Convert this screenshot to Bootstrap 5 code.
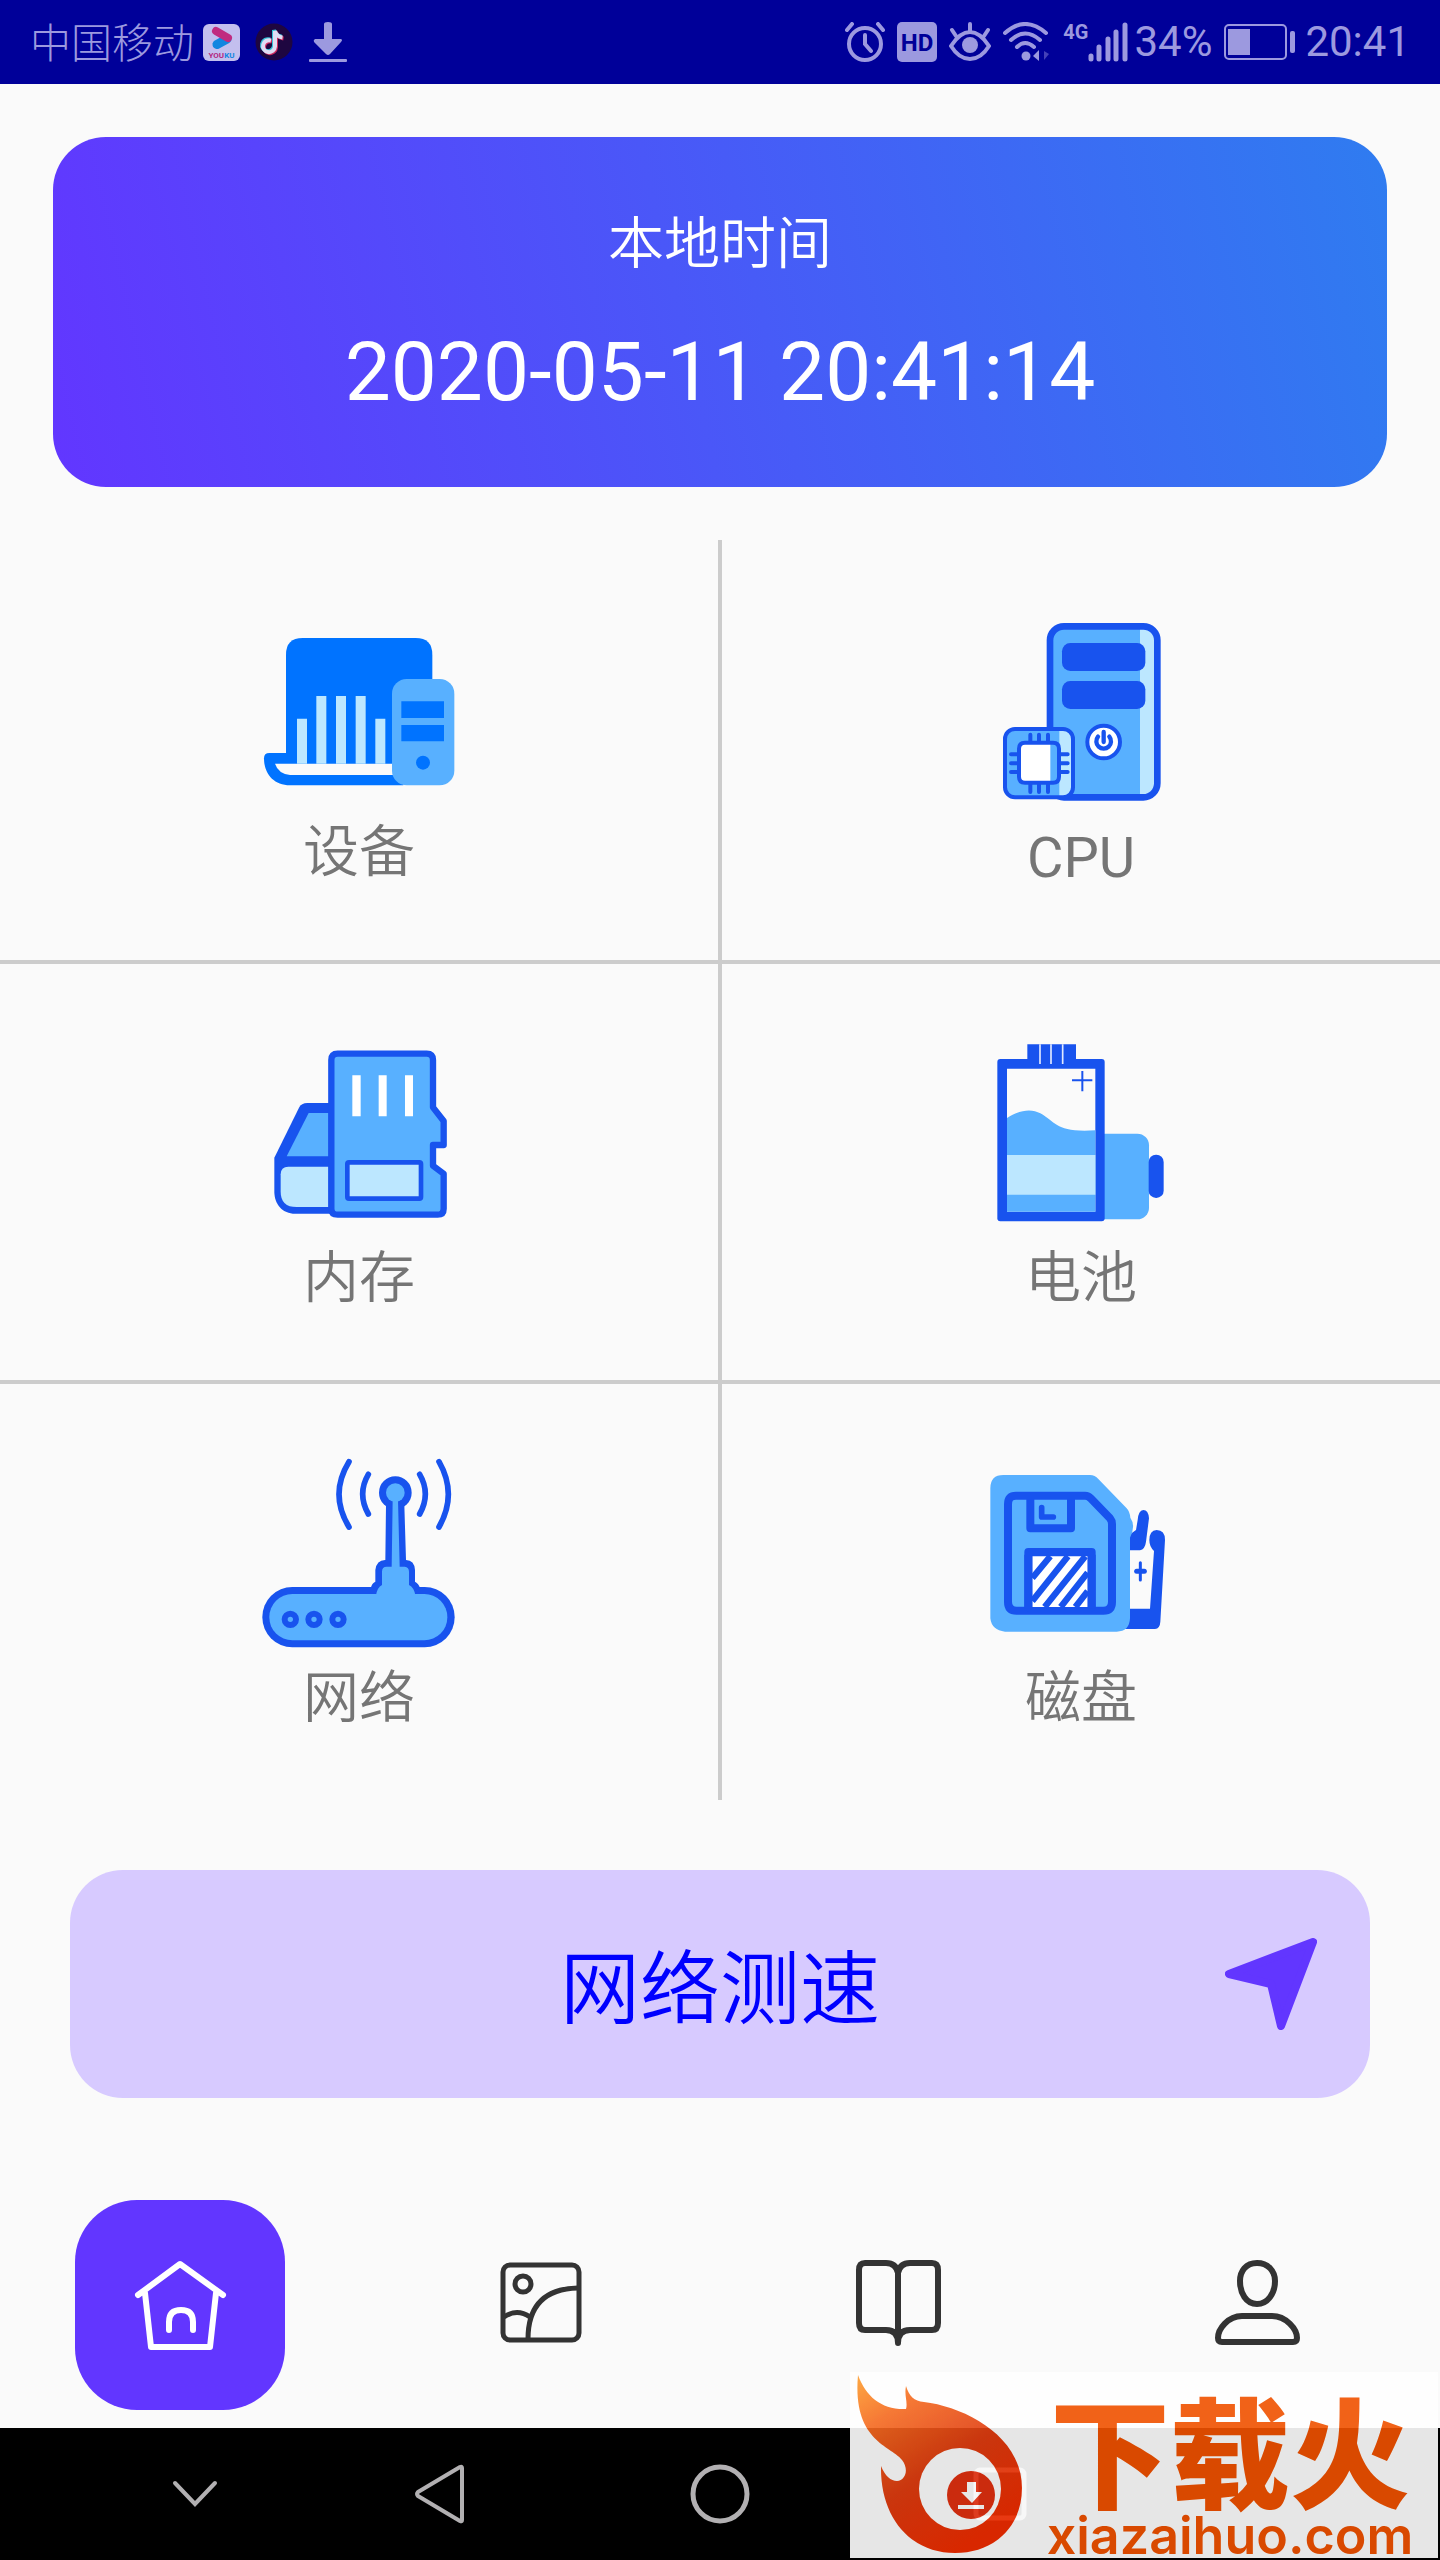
<!DOCTYPE html>
<html lang="zh-CN">
<head>
<meta charset="utf-8">
<meta name="viewport" content="width=device-width, initial-scale=1">
<title>本地时间</title>
<link href="https://cdn.jsdelivr.net/npm/bootstrap@5.3.0/dist/css/bootstrap.min.css" rel="stylesheet">
<style>
  body { background: #fafafa; font-family: Roboto, "Noto Sans CJK SC", sans-serif; }
  svg { display: block; flex: none; }
  .status-bar { height: 84px; padding: 0 30px; background: #009; color: #9c99df; font-size: 42px; line-height: 48px; }
  .carrier { font-size: 41px; font-weight: 300; padding-top: 4px; }
  .status-group { gap: 12px; }
  .status-left { gap: 9px; }
  .status-left svg + svg { margin-left: 6px; }
  .signal-group { margin-right: -6px; }
  .battery-level { margin-right: -3px; }
  .net-type { font-size: 20px; line-height: 20px; font-weight: 700; }
  .clock-card { margin: 53px 53px 0; padding-top: 6px; height: 350px; border-radius: 53px; background: linear-gradient(77deg, #6236ff, #2f7cf0); color: #fff; }
  .clock-title { font-size: 56px; line-height: 80px; margin: 0 0 34px; font-weight: 350; }
  .clock-time { font-size: 82px; line-height: 108px; }
  .tiles { margin-top: 53px; }
  .tile { height: 420px; color: #757575; text-decoration: none; font-size: 56px; line-height: 66px; font-weight: 350; }
  .tile-latin { font-weight: 400; }
  .tiles .col-6:nth-child(odd) .tile { border-right: 2px solid #ccc; }
  .tiles .col-6:nth-child(even) .tile { border-left: 2px solid #ccc; }
  .tiles .col-6:nth-child(n+3) .tile { border-top: 4px solid #ccc; }
  .speed-btn { display: grid; grid-template-columns: 1fr auto 1fr; align-items: center; margin: 70px 70px 0; height: 228px; padding: 0 53px; border: 0; border-radius: 53px; background: #d7caff; color: #00f; font-size: 80px; line-height: 100px; font-weight: 350; }
  .speed-text { padding-top: 12px; }
  .tabs { margin-top: 102px; height: 228px; }
  .tab-item { width: 210px; height: 210px; border-radius: 62px; display: flex; align-items: center; justify-content: center; color: #333; }
  .tab-item.active { background: #6236ff; color: #fff; }
  .sys-nav { height: 132px; background: #000; }
  .sys-nav button { width: 280px; height: 132px; padding: 0; border: 0; background: none; color: #b2b0b2; display: flex; align-items: center; justify-content: center; }
  .sys-nav .sys-hide { width: 210px; }
  .site-stamp { position: absolute; right: 2px; bottom: 2px; width: 588px; height: 186px; background: #fff; opacity: .9; color: #f15200; }
  .stamp-words { position: absolute; left: 172px; right: 0; top: 20px; text-align: center; }
  .stamp-name { font-family: "Noto Sans CJK SC", sans-serif; font-weight: 900; font-size: 120px; line-height: 112px; }
  .stamp-url { font-family: Inter, sans-serif; font-weight: 600; font-size: 52px; line-height: 44px; margin-top: 10px; }
</style>
<script src="https://cdn.jsdelivr.net/npm/bootstrap@5.3.0/dist/js/bootstrap.bundle.min.js"></script>
</head>
<body>
<div class="position-relative">

<header class="status-bar d-flex align-items-center justify-content-between">
  <div class="status-left d-flex align-items-center">
    <span class="carrier">中国移动</span>
    <svg width="37" height="37" viewBox="0 0 37 37"><rect width="37" height="37" rx="6" fill="#c3bfee"/><path d="M14 20.500 24 15" stroke="#1286e0" stroke-width="9" stroke-linecap="round"/><path d="M13 7 25 14" stroke="#c02c80" stroke-width="8" stroke-linecap="round"/><text x="18.500" y="34" font-size="8" font-weight="700" text-anchor="middle"><tspan fill="#b3267f">YOU</tspan><tspan fill="#1286e0">KU</tspan></text></svg>
    <svg width="38" height="38" viewBox="0 0 38 38"><circle cx="19" cy="19" r="18.500" fill="#1e0640"/><g fill="none" stroke-width="4"><path d="M16 17.500a6 6 0 1 0 4 6V8c1 4 4 6 7.500 6.500" stroke="#d02a60" transform="translate(1 1)"/><path d="M16 17.500a6 6 0 1 0 4 6V8c1 4 4 6 7.500 6.500" stroke="#35c3d8" transform="translate(-1 -1)"/><path d="M16 17.500a6 6 0 1 0 4 6V8c1 4 4 6 7.500 6.500" stroke="#e0dcf4"/></g></svg>
    <svg width="40" height="40" viewBox="0 0 40 40" fill="currentColor"><path d="M16 2q0-2 4-2t4 2v15h9q2 1 0 3L22 32q-2 2-4 0L6 20q-1-2 1-3h9z"/><rect x="1" y="37" width="38" height="3" rx="1"/></svg>
  </div>
  <div class="status-group d-flex align-items-center">
    <svg width="40" height="40" viewBox="0 0 40 40" fill="none" stroke="currentColor" stroke-width="4" stroke-linecap="round"><circle cx="20" cy="22" r="16"/><path d="M20 13v9l6 7M2 8l5-6M38 8l-5-6"/></svg>
    <svg width="40" height="40" viewBox="0 0 40 40"><rect width="40" height="40" rx="5" fill="currentColor"/><text x="20" y="29" font-size="24" font-weight="700" text-anchor="middle" fill="#009">HD</text></svg>
    <svg width="42" height="40" viewBox="0 0 42 40" fill="none" stroke="currentColor" stroke-width="4" stroke-linecap="round"><path d="M2 24Q11 10 21 10t19 14Q32 37 21 37T2 24zM21 10V2M7 14 3 8M35 14l4-6"/><circle cx="21" cy="23" r="8" fill="currentColor" stroke="none"/></svg>
    <svg width="48" height="40" viewBox="0 0 48 40" fill="none" stroke="currentColor" stroke-width="4" stroke-linecap="round"><path d="M2 11Q22-7 43 11M8 18q14-13 29 0M14 25q8-8 17 0"/><circle cx="23" cy="34" r="4.500" fill="currentColor" stroke="none"/><path d="M36 28v11l-6-5z" fill="currentColor" stroke="none"/><path d="M41 29v9l5-6z" fill="#4440b8" stroke="none"/></svg>
    <div class="signal-group d-flex align-items-start">
      <span class="net-type">4G</span>
      <svg width="40" height="40" viewBox="0 0 40 40" stroke="currentColor" stroke-width="5" stroke-linecap="round"><path d="M3 34v3M11 25v12M20 17v20M28 10v27M37 3v34"/></svg>
    </div>
    <span>34%</span>
    <svg class="battery-level" width="72" height="36" viewBox="0 0 72 36"><rect x="1" y="1" width="61" height="34" rx="4" fill="none" stroke="currentColor" stroke-width="2"/><rect x="4" y="5" width="22" height="26" fill="currentColor"/><rect x="66" y="7" width="5" height="22" rx="2" fill="currentColor"/></svg>
    <span>20:41</span>
  </div>
</header>

<main>
  <section class="clock-card d-flex flex-column align-items-center justify-content-center">
    <h1 class="clock-title">本地时间</h1>
    <time class="clock-time" datetime="2020-05-11T20:41:14">2020-05-11 20:41:14</time>
  </section>

  <nav class="tiles row g-0">
    <div class="col-6"><a href="#device" class="tile d-flex flex-column align-items-center justify-content-center">
      <svg width="260" height="204" viewBox="-3 45 780 612"><g fill="#0073ff"><path d="M168 480V164q0-50 50-50h339q50 0 50 50v326H168z"/><path d="M118 459h402v97H180c-50 0-78-36-78-81q0-16 16-16z"/></g><path d="M135 491h360v34H180q-35-4-45-34z" fill="#fafafa"/><path d="M201 356h30v135h-30zM259 288h30v203h-30zM318 288h30v203h-30zM377 288h30v203h-30zM436 356h30v135h-30z" fill="#bce7ff"/><rect x="486" y="237" width="187" height="319" rx="44" fill="#58b0ff"/><path d="M514 304h128v50H514zM514 375h128v49H514z" fill="#0073ff"/><circle cx="579" cy="488" r="21" fill="#0073ff"/></svg>
      <span>设备</span></a></div>
    <div class="col-6"><a href="#cpu" class="tile d-flex flex-column align-items-center justify-content-center">
      <svg width="260" height="216" viewBox="-27 27 780 648"><rect x="270" y="79" width="322" height="513" rx="42" fill="#58b0ff"/><path d="M540 85h14q32 4 32 40v420q0 36-32 40h-14z" fill="#bce7ff"/><rect x="270" y="79" width="322" height="513" rx="42" fill="none" stroke="#1853ee" stroke-width="20"/><g fill="#1853ee"><rect x="306" y="129" width="250" height="84" rx="25"/><rect x="306" y="243" width="250" height="84" rx="25"/></g><g stroke="#1853ee" stroke-linecap="round"><circle cx="431" cy="426" r="49" fill="#fff" stroke-width="12"/><path d="M414 410a22 22 0 1 0 34 0M431 396v30" fill="none" stroke-width="13"/><rect x="135" y="387" width="204" height="205" rx="30" fill="#58b0ff" stroke="none"/><path d="M298 387h12q29 3 29 30v145q0 27-29 30h-12z" fill="#bce7ff" stroke="none"/><rect x="135" y="387" width="204" height="205" rx="30" fill="none" stroke-width="12"/><rect x="177" y="428" width="120" height="120" rx="18" fill="#fff" stroke="none"/><path d="M271 432h20v112h-20z" fill="#58b0ff" stroke="none"/><path d="M195 428h84q18 0 18 18v84q0 18-18 18h-84q-18 0-18-18v-84q0-18 18-18zM211 404v20M237 404v20M264 404v20M211 552v24M237 552v24M264 552v24M153 463h20M153 490h20M153 516h20M301 463h22M301 490h22M301 516h22" fill="none" stroke-width="12"/></g></svg>
      <span class="tile-latin">CPU</span></a></div>
    <div class="col-6"><a href="#memory" class="tile d-flex flex-column align-items-center justify-content-center">
      <svg width="260" height="212" viewBox="-3 39 780 636"><path d="M232 249h72v332H195c-37 0-62-28-62-66V413l74-150q7-14 25-14z" fill="#1853ee"/><path d="M236 279h60v130H170z" fill="#58b0ff"/><path d="M175 440h121v121h-96q-48 0-48-46v-52q0-23 23-23z" fill="#bce7ff"/><path d="M323 101h267q19 0 19 19v142l32 41v72h-32v62l32 24v105q0 18-18 18H323q-19 0-19-18V120q0-19 19-19z" fill="#58b0ff" stroke="#1853ee" stroke-width="19" stroke-linejoin="round"/><path d="M367 166h25v123h-25zM446 166h24v123h-24zM525 166h24v123h-24z" fill="#fff"/><rect x="352" y="427" width="221" height="109" rx="5" fill="#bce7ff" stroke="#1853ee" stroke-width="14"/></svg>
      <span>内存</span></a></div>
    <div class="col-6"><a href="#battery" class="tile d-flex flex-column align-items-center justify-content-center">
      <svg width="260" height="212" viewBox="-27 39 780 636"><rect x="380" y="341" width="187" height="257" rx="35" fill="#58b0ff"/><rect x="566" y="404" width="45" height="130" rx="22" fill="#1853ee"/><rect x="112" y="117" width="322" height="487" rx="9" fill="#1853ee"/><path d="M202 73h146v50H202z" fill="#1853ee"/><path d="M240 73v59M273 73v59M308 73v59" stroke="#dfe8ff" stroke-width="5"/><path d="M141 146h265v429H141z" fill="#fafafa"/><path d="M141 294c40-26 75-28 100-14 50 28 45 58 165 51v244H141z" fill="#58b0ff"/><path d="M141 405h265v119H141z" fill="#bce7ff"/><path d="M336 181h61M367 153v61" stroke="#1853ee" stroke-width="6"/></svg>
      <span>电池</span></a></div>
    <div class="col-6"><a href="#network" class="tile d-flex flex-column align-items-center justify-content-center">
      <svg width="260" height="212" viewBox="-3 39 780 636"><g fill="#1853ee"><rect x="97" y="441" width="577" height="181" rx="90"/><path d="M422 445q4-16 14-20v-35q4-30 29-30h1l2-165h55l5 165q25 0 27 30v35q12 6 15 20z"/><circle cx="496" cy="158" r="49"/></g><g fill="#58b0ff"><rect x="118" y="462" width="534" height="139" rx="69"/><path d="M438 466q4-24 18-31v-40q0-15 14-15h15l3-200h16l5 200h15q13 2 13 15v40q15 7 19 31z"/><circle cx="496" cy="158" r="28"/></g><g fill="none" stroke="#1853ee" stroke-width="18" stroke-linecap="round"><circle cx="181" cy="538" r="17"/><circle cx="252" cy="538" r="17"/><circle cx="324" cy="538" r="17"/><path d="M357 65q-60 98 0 196M415 103q-34 58 0 119M569 103q34 58 0 119M627 65q56 98 0 196" stroke-width="17"/></g></svg>
      <span>网络</span></a></div>
    <div class="col-6"><a href="#disk" class="tile d-flex flex-column align-items-center justify-content-center">
      <svg width="260" height="212" viewBox="-27 39 780 636"><path d="M505 325h80v190h-80z" fill="#fafafa"/><path d="M480 567h105q15-2 16-22l14-245q0-30-25-30-22 2-22 30 0 20 14 33l-12 173h-70zM500 331h40q15-3 18-26l9-70q-2-25-17-25-15 2-17 30l-5 30-28 20z" fill="#1853ee"/><path d="M530 394h23" stroke="#1853ee" stroke-width="15" stroke-linecap="round"/><path d="M541 368v52" stroke="#1853ee" stroke-width="9" stroke-linecap="round"/><path d="M130 105h260q15 0 25 12l85 88q9 9 11 28 17 24-1 60v242q-2 40-40 40H135q-40-4-44-40V145q0-40 39-40z" fill="#58b0ff"/><g fill="none" stroke="#1853ee" stroke-width="24"><path d="M168 167h207q10 0 17 8l58 60q6 7 6 17v233q0 27-26 27H170q-26 0-26-27V193q0-26 24-26zM211 167v98h122v-98" stroke-linejoin="round"/><path d="M245 203v28h35" stroke-width="17" stroke-linecap="round" stroke-linejoin="round"/></g><rect x="193" y="324" width="214" height="190" rx="12" fill="#1853ee"/><path d="M217 349h166v152H217z" fill="#fff"/><path d="M271 349 217 414M324 349 217 483M376 349 254 501M383 398 302 501M383 454 346 501" stroke="#1853ee" stroke-width="19"/><path d="M205 344v162M395 344v162" stroke="#1853ee" stroke-width="24"/></svg>
      <span>磁盘</span></a></div>
  </nav>

  <div class="d-grid">
    <button type="button" class="speed-btn">
      <span></span><span class="speed-text">网络测速</span>
      <svg class="ms-auto" width="92" height="92" viewBox="0 0 92 92"><path d="M88 4 4 36l42 10 10 42z" fill="#6236ff" stroke="#6236ff" stroke-width="8" stroke-linejoin="round"/></svg>
    </button>
  </div>
</main>

<nav class="tabs row g-0">
  <div class="col-3 d-flex justify-content-center"><a href="#home" class="tab-item active" aria-label="首页"><svg width="100" height="100" viewBox="0 0 100 100" fill="none" stroke="currentColor" stroke-width="6" stroke-linecap="round" stroke-linejoin="round"><path d="M8 40 50 9l43 31M15 38l6 54h59l6-54M39 75v-8q0-12 12-12t12 12v8"/></svg></a></div>
  <div class="col-3 d-flex justify-content-center"><a href="#gallery" class="tab-item" aria-label="图片"><svg width="100" height="100" viewBox="0 0 100 100" fill="none" stroke="currentColor" stroke-width="5"><rect x="13" y="10" width="76" height="75" rx="7"/><circle cx="33" cy="29" r="8"/><path d="M88 33Q38 34 38 84M14 62q13-9 26 0"/></svg></a></div>
  <div class="col-3 d-flex justify-content-center"><a href="#read" class="tab-item" aria-label="阅读"><svg width="100" height="100" viewBox="0 0 100 100" fill="none" stroke="currentColor" stroke-width="6" stroke-linecap="round" stroke-linejoin="round"><path d="M48 88V18q-2-10-12-10H15q-6 0-6 7v53q0 7 6 7h21q12 0 12 13 0-13 12-13h22q6 0 6-7V15q0-7-6-7H60Q50 8 48 18"/></svg></a></div>
  <div class="col-3 d-flex justify-content-center"><a href="#me" class="tab-item" aria-label="我的"><svg width="100" height="100" viewBox="0 0 100 100" fill="none" stroke="currentColor" stroke-width="6" stroke-linejoin="round"><path d="M47 8c11 0 18 8 18 18 0 12-7 23-18 23S30 38 30 26C30 16 36 8 47 8zM32 61h30c14 0 25 13 25 22q0 4-4 4H12q-4 0-4-4c0-9 10-22 24-22z"/></svg></a></div>
</nav>

<footer class="sys-nav d-flex">
  <div class="flex-fill d-flex justify-content-end"><button type="button" class="sys-hide" aria-label="收起"><svg width="48" height="30" viewBox="0 0 48 30" fill="none" stroke="currentColor" stroke-width="4" stroke-linecap="round"><path d="M4 4l20 21L44 4"/></svg></button></div>
  <button type="button" aria-label="返回"><svg width="60" height="60" viewBox="0 0 60 60" fill="none" stroke="currentColor" stroke-width="4" stroke-linejoin="round"><path d="M50 3q2-1 2 1v52q0 2-2 1L8 32q-2-2 0-4z"/></svg></button>
  <button type="button" aria-label="主屏幕"><svg width="60" height="60" viewBox="0 0 60 60" fill="none" stroke="currentColor" stroke-width="5"><circle cx="30" cy="30" r="27"/></svg></button>
  <button type="button" aria-label="最近任务"><svg width="60" height="60" viewBox="0 0 60 60" fill="none" stroke="currentColor" stroke-width="5"><rect x="6" y="6" width="48" height="48" rx="4"/></svg></button>
  <div class="flex-fill"><div class="sys-hide"></div></div>
</footer>

<aside class="site-stamp">
  <svg width="180" height="186" viewBox="0 0 180 186"><defs><linearGradient id="flame" x1="0" y1="0" x2=".6" y2="1"><stop offset="0" stop-color="#ffa030"/><stop offset=".25" stop-color="#f56a20"/><stop offset=".6" stop-color="#e03c10"/><stop offset="1" stop-color="#f02c00"/></linearGradient></defs><path d="M8 3C16 25 32 38 56 37 58 30 54 24 56 14 59 24 64 29 74 30 115 35 172 64 172 116 172 155 144 181 105 181 60 181 30 145 31 94 35 104 41 109 47 109 56 108 59 97 52 88 42 74 2 70 8 3z" fill="url(#flame)"/><ellipse cx="110" cy="117" rx="41" ry="41" fill="#fff"/><circle cx="121" cy="123" r="24" fill="#e23010"/><path d="M117 110h9v10h6l-10 11-11-11h6zM108 133h26v4h-26z" fill="#fff"/></svg>
  <div class="stamp-words"><div class="stamp-name">下载火</div><div class="stamp-url">xiazaihuo.com</div></div>
</aside>

</div>
</body>
</html>
